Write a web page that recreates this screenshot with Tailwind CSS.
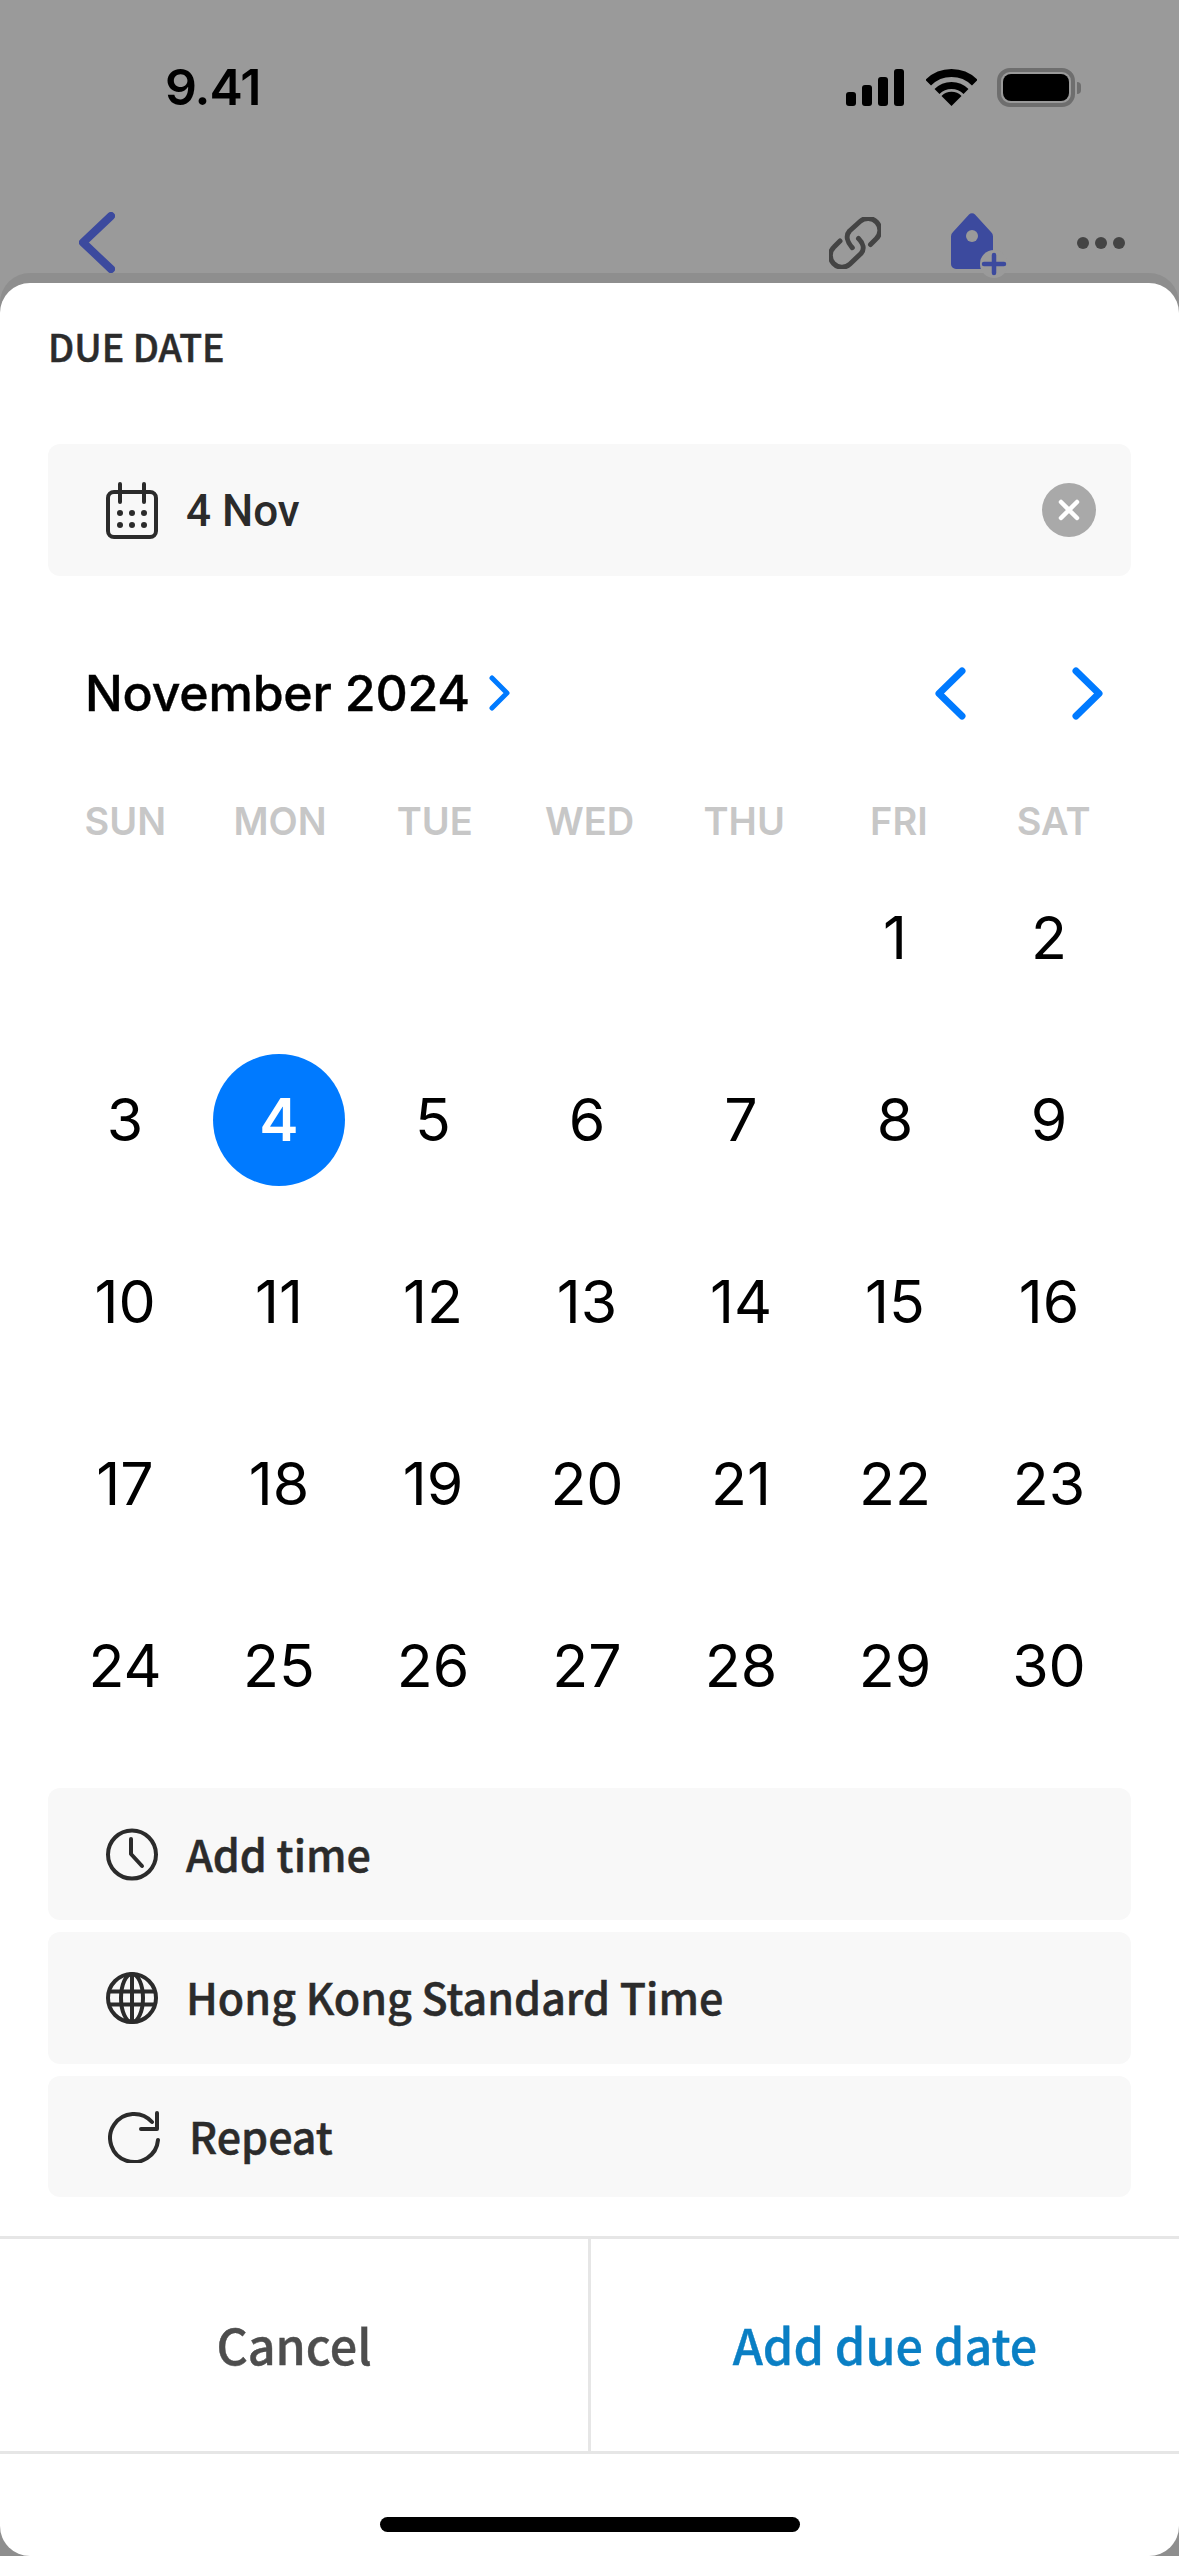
<!DOCTYPE html>
<html lang="en">
<head>
    <meta charset="UTF-8">
    <meta name="viewport" content="width=device-width, initial-scale=1.0">
    <title>Due Date</title>
    <script src="https://cdn.jsdelivr.net/npm/@tailwindcss/browser@4"></script>
</head>
<body class="bg-[#9a9a9a]">
<div class="w-[1179px] h-[2556px] overflow-hidden flex flex-col bg-[#9a9a9a] font-['Inter',sans-serif]">

    <!-- Status bar -->
    <div class="h-[212px] flex items-start pt-[68px] pl-[165px] pr-[98px] justify-between">
        <span class="text-[50px] leading-[38px] font-semibold tracking-[-1px] text-black">9.41</span>
        <div class="flex items-start">
            <svg class="w-[58px] h-[37px] mt-[1px]" viewBox="0 0 58 37" fill="#000">
                <rect x="0" y="23" width="10" height="14" rx="3"/>
                <rect x="16" y="16" width="10" height="21" rx="3"/>
                <rect x="32" y="8" width="10" height="29" rx="3"/>
                <rect x="48" y="0" width="10" height="37" rx="3"/>
            </svg>
            <svg class="w-[51px] h-[37px] mt-[1px] ml-[22px]" viewBox="0 0 51 37" fill="none" stroke="#000">
                <path d="M2.2 13.7A33 33 0 0 1 48.8 13.7" stroke-width="8"/>
                <path d="M11 22.5A20.5 20.5 0 0 1 40 22.5" stroke-width="7"/>
                <path d="M25.5 37L15.5 27A14 14 0 0 1 35.5 27Z" fill="#000" stroke="none"/>
            </svg>
            <div class="ml-[20px] w-[78px] h-[39px] rounded-[13px] border-[4px] border-[#6e6e6e] p-[2px]">
                <div class="w-full h-full bg-black rounded-[8px]"></div>
            </div>
            <div class="ml-[2px] mt-[14px] w-[4px] h-[12px] bg-[#6e6e6e] rounded-r-full"></div>
        </div>
    </div>

    <!-- Page header behind the sheet -->
    <div class="h-[61px] relative z-10 flex items-start justify-between pl-[79px] pr-[54px]">
        <svg class="w-[36px] h-[61px]" viewBox="0 0 36 61" fill="none" stroke="#3c4a9e" stroke-width="8" stroke-linecap="round" stroke-linejoin="round">
            <path d="M32 4L4 30.5L32 57"/>
        </svg>
        <div class="flex items-start">
            <svg class="w-[52px] h-[52px] mt-[5px]" viewBox="0 0 52 52" fill="none" stroke="#444" stroke-width="5" stroke-linecap="round" stroke-linejoin="round">
                <path d="M41.5 27.5L47 22A11 11 0 0 0 31 4.5L20.5 14C16.5 18.5 18 25 23.3 30.7"/>
                <path d="M29.5 21.5C34 26 36 32 32 36.5L21 47A11 11 0 0 1 5 30L11 24"/>
            </svg>
            <svg class="w-[56px] h-[64px] mt-[1px] ml-[70px] overflow-visible" viewBox="0 0 56 64">
                <path d="M18 1.5a4 4 0 0 1 6 0L40 19a6 6 0 0 1 2 5V56H5a5 5 0 0 1-5-5V24a6 6 0 0 1 2-5Z" fill="#3c4a9e"/>
                <circle cx="21" cy="23" r="6" fill="#9a9a9a"/>
                <circle cx="43" cy="51" r="14" fill="#9a9a9a"/>
                <path d="M43 42V60M33 51H53" stroke="#3c4a9e" stroke-width="4.5" stroke-linecap="round"/>
            </svg>
            <div class="flex items-center gap-[6px] mt-[25px] ml-[70px]">
                <span class="w-[12px] h-[12px] rounded-full bg-[#444]"></span>
                <span class="w-[12px] h-[12px] rounded-full bg-[#444]"></span>
                <span class="w-[12px] h-[12px] rounded-full bg-[#444]"></span>
            </div>
        </div>
    </div>

    <!-- Sheet -->
    <div class="flex-1 bg-[#8e8e8e] rounded-t-[30px] pt-[10px] flex flex-col">
        <div class="flex-1 bg-white rounded-[30px] flex flex-col">
            <div class="px-[48px]">
                <div class="h-[126px] flex items-center text-[37.5px] font-medium [-webkit-text-stroke:0.5px_#2b2b2b] text-[#2b2b2b] font-['Noto_Sans_CJK_SC',sans-serif]">DUE DATE</div>

                <!-- Selected date -->
                <div class="mt-[35px] h-[132px] rounded-[12px] bg-[#f8f8f8] flex items-center pl-[58px] pr-[35px]">
                    <svg class="w-[52px] h-[57px]" viewBox="0 0 52 57" fill="none" stroke="#2b2b2b" stroke-width="4" stroke-linecap="round">
                        <rect x="2" y="10" width="48" height="45" rx="6"/>
                        <path d="M14 2V20M38 2V20"/>
                        <g fill="#2b2b2b" stroke="none">
                            <circle cx="14" cy="31" r="3"/><circle cx="26" cy="31" r="3"/><circle cx="38" cy="31" r="3"/>
                            <circle cx="14" cy="43" r="3"/><circle cx="26" cy="43" r="3"/><circle cx="38" cy="43" r="3"/>
                        </g>
                    </svg>
                    <span class="ml-[28px] mt-[2px] text-[44px] font-medium text-[#2b2b2b] font-['Roboto',sans-serif]">4 Nov</span>
                    <div class="ml-auto w-[54px] h-[54px] rounded-full bg-[#a9a9a9] flex items-center justify-center">
                        <svg class="w-[22px] h-[22px]" viewBox="0 0 22 22" stroke="#fff" stroke-width="4.5" stroke-linecap="round">
                            <path d="M3 3L19 19M19 3L3 19"/>
                        </svg>
                    </div>
                </div>

                <!-- Month switcher -->
                <div class="mt-[57px] h-[120px] flex items-center pl-[37px] pr-[28px]">
                    <span class="text-[50px] font-medium tracking-[-0.2px] [-webkit-text-stroke:0.4px_#000] text-black">November 2024</span>
                    <svg class="w-[21px] h-[36px] ml-[19px]" viewBox="0 0 21 36" fill="none" stroke="#007aff" stroke-width="5" stroke-linecap="round" stroke-linejoin="round">
                        <path d="M3 3L18 18L3 33"/>
                    </svg>
                    <svg class="w-[31px] h-[53px] ml-auto" viewBox="0 0 31 53" fill="none" stroke="#007aff" stroke-width="7" stroke-linecap="round" stroke-linejoin="round">
                        <path d="M27 4L4 26.5L27 49"/>
                    </svg>
                    <svg class="w-[31px] h-[53px] ml-[106px]" viewBox="0 0 31 53" fill="none" stroke="#007aff" stroke-width="7" stroke-linecap="round" stroke-linejoin="round">
                        <path d="M4 4L27 26.5L4 49"/>
                    </svg>
                </div>

                <!-- Weekdays -->
                <div class="mt-[40px] h-[54px] grid grid-cols-7 items-center text-center text-[38px] font-semibold text-[#c7c7c7]">
                    <span>SUN</span><span>MON</span><span>TUE</span><span>WED</span><span>THU</span><span>FRI</span><span>SAT</span>
                </div>

                <!-- Days -->
                <div class="w-[1078px] grid grid-cols-7 auto-rows-[182px] items-center justify-items-center text-[59px] text-black">
                    <span></span><span></span><span></span><span></span><span></span><span>1</span><span>2</span>
                    <span>3</span>
                    <span class="w-[132px] h-[132px] rounded-full bg-[#007aff] text-white font-semibold flex items-center justify-center">4</span>
                    <span>5</span><span>6</span><span>7</span><span>8</span><span>9</span>
                    <span>10</span><span>11</span><span>12</span><span>13</span><span>14</span><span>15</span><span>16</span>
                    <span>17</span><span>18</span><span>19</span><span>20</span><span>21</span><span>22</span><span>23</span>
                    <span>24</span><span>25</span><span>26</span><span>27</span><span>28</span><span>29</span><span>30</span>
                </div>

                <!-- Options -->
                <div class="mt-[31px] flex flex-col gap-[12px] text-[43px] font-medium [-webkit-text-stroke:0.5px_#2b2b2b] leading-[60px] text-[#2b2b2b] font-['Noto_Sans_CJK_SC',sans-serif]">
                    <div class="h-[132px] rounded-[12px] bg-[#f8f8f8] flex items-center pl-[58px]">
                        <svg class="w-[52px] h-[53px]" viewBox="0 0 52 53" fill="none" stroke="#2b2b2b" stroke-width="4" stroke-linecap="round" stroke-linejoin="round">
                            <circle cx="26" cy="26.5" r="24"/>
                            <path d="M25 11V26L36 38"/>
                        </svg>
                        <span class="ml-[28px] mb-[3px]">Add time</span>
                    </div>
                    <div class="h-[132px] rounded-[12px] bg-[#f8f8f8] flex items-center pl-[58px]">
                        <svg class="w-[52px] h-[54px]" viewBox="0 0 52 54" fill="none" stroke="#2b2b2b" stroke-width="4">
                            <circle cx="26" cy="27" r="24"/>
                            <ellipse cx="26" cy="27" rx="11" ry="24"/>
                            <path d="M26 3V51M4 20.5H48M4 33.5H48"/>
                        </svg>
                        <span class="ml-[28px] mb-[4px]">Hong Kong Standard Time</span>
                    </div>
                    <div class="h-[121px] rounded-[12px] bg-[#f8f8f8] flex items-center pl-[60px]">
                        <svg class="w-[52px] h-[52px]" viewBox="0 0 52 52" fill="none" stroke="#2b2b2b" stroke-width="4" stroke-linecap="round" stroke-linejoin="round">
                            <path d="M44 11A24 24 0 1 0 50 29"/>
                            <path d="M49 2V18H33"/>
                        </svg>
                        <span class="ml-[29px] mb-[3px]">Repeat</span>
                    </div>
                </div>
            </div>

            <!-- Actions -->
            <div class="mt-[39px] h-[218px] border-y-[3px] border-[#e6e6e6] flex text-[48.5px] font-medium [-webkit-text-stroke:0.4px] leading-[60px] font-['Noto_Sans_CJK_SC',sans-serif]">
                <div class="w-[591px] border-r-[3px] border-[#e6e6e6] flex items-center justify-center text-[#4d4d4d]"><span class="mb-[3px]">Cancel</span></div>
                <div class="flex-1 flex items-center justify-center text-[#0a7fc4]"><span class="mb-[3px]">Add due date</span></div>
            </div>

            <!-- Home indicator -->
            <div class="mt-[63px] mx-auto w-[420px] h-[15px] rounded-full bg-black"></div>
        </div>
    </div>
</div>
</body>
</html>
